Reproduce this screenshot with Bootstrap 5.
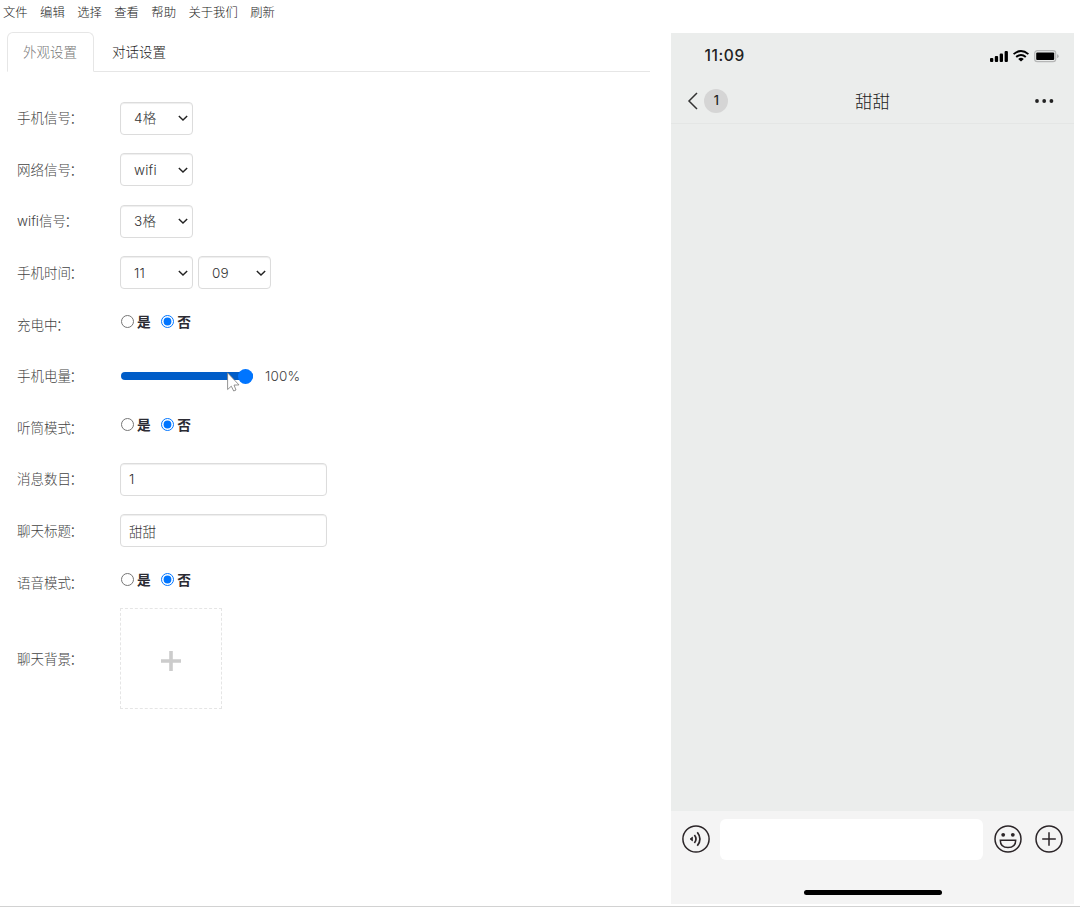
<!DOCTYPE html>
<html lang="zh-CN">
<head>
<meta charset="utf-8">
<title>对话设置</title>
<link href="https://cdn.jsdelivr.net/npm/bootstrap@5.3.0/dist/css/bootstrap.min.css" rel="stylesheet">
<style>
body{font-family:Inter,"Noto Sans CJK SC",sans-serif;font-weight:300;font-size:13.5px;line-height:20px;color:#444;height:907px;overflow:hidden;border-bottom:1px solid #d2d2d2;background:#fff}
.menu{height:32px;padding:3px 0 0 3px;gap:12.4px;font-size:12.35px;color:#222}
.editor{width:650px;padding-left:7px}
.nav-tabs{--bs-nav-tabs-border-color:#e6e6e6;--bs-nav-tabs-link-active-border-color:#e6e6e6 #e6e6e6 #fff;--bs-nav-tabs-link-active-color:#777;height:40px}
.nav-tabs .nav-link{height:40px;padding:9px 15px 0;color:#222;width:87px;white-space:nowrap}
.nav-tabs .nav-link.active{color:#777}
.nav-tabs .nav-item+.nav-item{margin-left:2px}
.settings{padding:20.4px 0 0 10px}
.line{height:51.6px}
.line.tall{height:101px}
.cap{width:103px;flex:none}
.cap i{font-style:normal;margin-left:-1.5px}
.form-select,.form-control{height:33px;border-color:#dcdcdc;border-radius:4px;font-size:13.5px;font-weight:300;color:#333;box-shadow:inset 0 1px 1px rgba(0,0,0,.07);padding:0 8px}
.form-select{letter-spacing:.2px;width:73px;padding:0 12px 0 13px;margin-right:5px;background-size:10px;background-position:right 4px center;background-image:url("data:image/svg+xml,%3csvg xmlns='http://www.w3.org/2000/svg' viewBox='0 0 12 12'%3e%3cpath fill='none' stroke='%23222' stroke-width='1.7' d='M1 3.5l5 5 5-5'/%3e%3c/svg%3e")}
.form-control{width:207px}
.choice{font-weight:700;color:#2b2b33;font-size:13.7px;margin-top:-6px;padding-left:.5px}
.choice input{width:13px;height:13px;margin:0 3.5px 0 0;accent-color:#0075ff}
.choice label{display:flex;align-items:center;margin-right:10px}
.power{width:133px;height:15px;position:relative}
.power .fillbar{height:8px;width:100%;border-radius:4px;background:#005dc8;margin-left:1px}
.power .knob{position:absolute;right:0;top:0;width:15.5px;height:15.5px;border-radius:50%;background:#0075ff}
.power svg{position:absolute;left:107px;top:3px}
.percent{letter-spacing:.2px}
.upload{width:102px;height:101px;border:1px dashed #e5e5e5;padding-top:4px}
.phone{width:403px;height:871px;margin:1px 5.6px 0 0;background:#ebedec;color:#222}
.statusbar{height:44px;padding:1px 15.5px 0 33px}
.clock{font-size:15.5px;font-weight:500;letter-spacing:.6px}
.titlebar{height:47px;padding:2px 20.5px 0 16px;border-bottom:1px solid #e4e6e5;position:relative}
.count{width:24px;height:24px;border-radius:50%;background:#d5d5d5;font-size:12.5px;font-weight:500;margin-left:6px}
.chatname{font-size:17.5px;position:absolute;left:0;right:1px;text-align:center;top:15px}
.inputbar{background:#f4f4f4;height:93px;padding:7.5px 11.3px 0 11px}
.msgbox{width:263px;height:41px;border-radius:6px;background:#fff;margin-left:10px}
.plus{margin-left:13px}
.homebar{width:138px;height:5px;border-radius:3px;background:#000;margin-top:30.5px}
</style>
</head>
<body>
<nav class="menu d-flex"><span>文件</span><span>编辑</span><span>选择</span><span>查看</span><span>帮助</span><span>关于我们</span><span>刷新</span></nav>
<div class="d-flex justify-content-between">
<main class="editor">
<ul class="nav nav-tabs"><li class="nav-item"><a class="nav-link active">外观设置</a></li><li class="nav-item"><a class="nav-link">对话设置</a></li></ul>
<div class="settings">
<div class="line d-flex align-items-center"><span class="cap">手机信号<i>：</i></span><select class="form-select"><option>4格</option></select></div>
<div class="line d-flex align-items-center"><span class="cap">网络信号<i>：</i></span><select class="form-select"><option>wifi</option></select></div>
<div class="line d-flex align-items-center"><span class="cap">wifi信号<i>：</i></span><select class="form-select"><option>3格</option></select></div>
<div class="line d-flex align-items-center"><span class="cap">手机时间<i>：</i></span><select class="form-select"><option>11</option></select><select class="form-select"><option>09</option></select></div>
<div class="line d-flex align-items-center"><span class="cap">充电中<i>：</i></span><div class="choice d-flex"><label><input type="radio" name="charge">是</label><label><input type="radio" name="charge" checked>否</label></div></div>
<div class="line d-flex align-items-center"><span class="cap">手机电量<i>：</i></span><div class="power d-flex align-items-center"><div class="fillbar"></div><div class="knob"></div><svg width="20" height="26" viewBox="0 0 20 26"><path d="M.6.8V17.5l3.7-3.3 2.4 4.8 2.3-1-2-4.9 5-.2z" fill="#fff" stroke="#777" stroke-width=".8"/></svg></div><span class="percent ms-2 ps-1">100%</span></div>
<div class="line d-flex align-items-center"><span class="cap">听筒模式<i>：</i></span><div class="choice d-flex"><label><input type="radio" name="ear">是</label><label><input type="radio" name="ear" checked>否</label></div></div>
<div class="line d-flex align-items-center"><span class="cap">消息数目<i>：</i></span><input class="form-control" value="1"></div>
<div class="line d-flex align-items-center"><span class="cap">聊天标题<i>：</i></span><input class="form-control" value="甜甜"></div>
<div class="line d-flex align-items-center"><span class="cap">语音模式<i>：</i></span><div class="choice d-flex"><label><input type="radio" name="voice">是</label><label><input type="radio" name="voice" checked>否</label></div></div>
<div class="line tall d-flex align-items-center"><span class="cap">聊天背景<i>：</i></span><div class="upload d-flex align-items-center justify-content-center"><svg width="20" height="20" viewBox="0 0 20 20"><path d="M10 0v20M0 10h20" stroke="#ccc" stroke-width="3.6"/></svg></div></div>
</div>
</main>
<section class="phone d-flex flex-column">
<div class="statusbar d-flex align-items-center"><span class="clock me-auto">11:09</span>
<svg width="69" height="14" viewBox="0 0 69 14"><g fill="#000"><rect y="9" width="3.3" height="4" rx="1"/><rect x="4.8" y="7" width="3.3" height="6" rx="1"/><rect x="9.7" y="4.5" width="3.3" height="8.5" rx="1"/><rect x="14.6" y="2" width="3.3" height="11" rx="1"/><path d="M28.2 9.9Q31 7.8 33.8 9.9L31 12.6z"/></g><path d="M23.6 5.1Q31-1.3 38.4 5.1M26.2 7.9Q31 3.9 35.8 7.9" fill="none" stroke="#000" stroke-width="1.9"/><rect x="44.7" y="1.7" width="21" height="11" rx="2.7" fill="none" stroke="#b5b6b6" stroke-width="1.2"/><rect x="46.2" y="3.5" width="18" height="7.4" rx="1"/><path d="M67 5.3q1.7 0 1.7 1.9T67 9z" fill="#b5b6b6"/></svg></div>
<div class="titlebar d-flex align-items-center"><svg width="11" height="18" viewBox="0 0 11 18"><path d="M10 1 2 9l8 8" fill="none" stroke="#333" stroke-width="1.5"/></svg><span class="count d-flex align-items-center justify-content-center">1</span><span class="chatname">甜甜</span><svg class="ms-auto" width="20" height="6" viewBox="0 0 20 6"><g fill="#222"><circle cx="3" cy="3" r="1.9"/><circle cx="10.2" cy="3" r="1.9"/><circle cx="17.4" cy="3" r="1.9"/></g></svg></div>
<div class="flex-grow-1"></div>
<div class="inputbar">
<div class="d-flex align-items-center">
<svg width="28" height="28" viewBox="0 0 28 28" fill="none" stroke="#2b2528" stroke-width="1.5"><circle cx="14" cy="14" r="13.1"/><path d="M8 14l2.5-2v4z" fill="#2b2528" stroke-width=".7"/><path d="M12.4 10q3.2 4 0 8M15.3 7.2q5.3 6.8 0 13.6" stroke-width="1.7"/></svg>
<div class="msgbox me-auto"></div>
<svg width="28" height="28" viewBox="0 0 28 28" fill="none" stroke="#2b2528" stroke-width="1.5"><circle cx="14" cy="14" r="13"/><g fill="#2b2528" stroke="none"><circle cx="9.2" cy="9.8" r="1.9"/><circle cx="18.8" cy="9.8" r="1.9"/></g><path d="M6.3 15.2h15.4q0 7.3-7.7 7.3t-7.7-7.3z"/></svg>
<svg class="plus" width="28" height="28" viewBox="0 0 28 28" fill="none" stroke="#2b2528" stroke-width="1.5"><circle cx="14" cy="14" r="13"/><path d="M14 7.2v13.6M7.2 14h13.6"/></svg>
</div>
<div class="homebar ms-auto me-auto"></div>
</div>
</section>
</div>
<script src="https://cdn.jsdelivr.net/npm/bootstrap@5.3.0/dist/js/bootstrap.bundle.min.js"></script>
</body>
</html>
